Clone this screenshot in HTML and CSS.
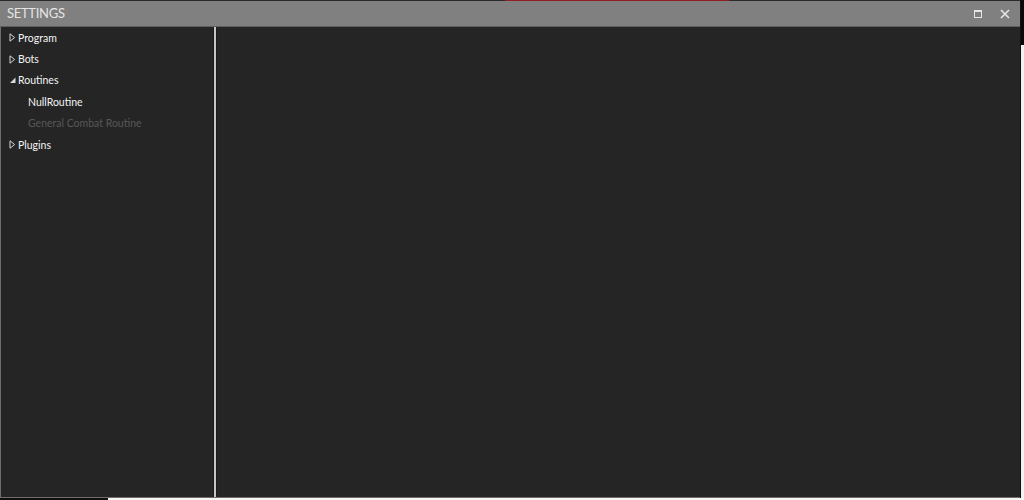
FILE: index.html
```html
<!DOCTYPE html>
<html>
<head>
<meta charset="utf-8">
<link rel="stylesheet" href="styles.css">
</head>
<body>
<div class="screen">
  <div class="main-row">
    <div class="window">
      <div class="top-strip"><span class="strip-gap"></span><span class="strip-red"></span><span class="strip-rest"></span></div>
      <div class="titlebar">
        <span class="title">SETTINGS</span>
        <div class="controls">
          <svg class="ctl" width="10" height="10" viewBox="0 0 10 10"><rect x="1.5" y="1.5" width="7" height="7" fill="none" stroke="#e6e6e6" stroke-width="1"/><rect x="1" y="1" width="8" height="2" fill="#e6e6e6"/></svg>
          <svg class="ctl close" width="12" height="12" viewBox="0 0 12 12"><path d="M2 2 L10 10 M10 2 L2 10" stroke="#e6e6e6" stroke-width="1.6"/></svg>
        </div>
      </div>
      <div class="body">
        <div class="tree">
          <div class="row"><svg class="arrow" width="7" height="9" viewBox="0 0 7 9"><path d="M1 0.8 L5.6 4.5 L1 8.2 Z" fill="none" stroke="#d8d8d8" stroke-width="1"/></svg><span>Program</span></div>
          <div class="row"><svg class="arrow" width="7" height="9" viewBox="0 0 7 9"><path d="M1 0.8 L5.6 4.5 L1 8.2 Z" fill="none" stroke="#d8d8d8" stroke-width="1"/></svg><span>Bots</span></div>
          <div class="row"><svg class="arrow" width="7" height="9" viewBox="0 0 7 9"><path d="M6.5 1.5 L6.5 7 L1 7 Z" fill="#d8d8d8"/></svg><span>Routines</span></div>
          <div class="row child">NullRoutine</div>
          <div class="row child disabled">General Combat Routine</div>
          <div class="row"><svg class="arrow" width="7" height="9" viewBox="0 0 7 9"><path d="M1 0.8 L5.6 4.5 L1 8.2 Z" fill="none" stroke="#d8d8d8" stroke-width="1"/></svg><span>Plugins</span></div>
        </div>
        <div class="splitter"></div>
        <div class="content"></div>
      </div>
    </div>
    <div class="outside-right"><div class="or-dark"></div><div class="or-light"></div></div>
  </div>
  <div class="bottom-strip"><div class="bs-dark"></div><div class="bs-light"></div></div>
</div>
</body>
</html>
```
FILE: styles.css
```css
html, body { margin: 0; padding: 0; }
body {
  width: 1024px;
  height: 500px;
  overflow: hidden;
  background: #ffffff;
  font-family: Lato, "Open Sans", "Liberation Sans", sans-serif;
}
.screen { display: flex; flex-direction: column; width: 1024px; height: 500px; }
.main-row { display: flex; height: 498px; }
.window {
  width: 1020px;
  display: flex;
  flex-direction: column;
  background: #252525;
  border-right: 1px solid #111;
}
.top-strip { height: 1px; display: flex; background: #2b2b2b; }
.strip-gap { width: 505px; }
.strip-red { width: 224px; background: #8e2020; }
.strip-rest { flex: 1; }
.titlebar {
  height: 25px;
  background: #808080;
  border-bottom: 1px solid #5f5f5f;
  display: flex;
  align-items: center;
  justify-content: space-between;
  padding-left: 7px;
}
.title {
  color: #e4e4e4;
  font-size: 13px;
  letter-spacing: -0.3px;
  font-family: Lato, "Open Sans", sans-serif;
  line-height: 1;
  margin-top: -1px;
}
.controls { display: flex; align-items: center; gap: 16px; padding-right: 9px; }
.ctl { display: block; }
.body {
  flex: 1;
  display: flex;
  border-left: 1px solid #6e6e6e;
  border-bottom: 1px solid #6e6e6e;
}
.tree {
  width: 212px;
  padding-top: 0;
  display: flex;
  flex-direction: column;
}
.row {
  height: 21.4px;
  display: flex;
  align-items: center;
  color: #f4f4f4;
  font-size: 10.5px;
  padding-left: 8px;
}
.arrow { margin-right: 2px; display: block; }
.row.child { padding-left: 27px; }
.row.disabled { color: #585858; }
.splitter {
  width: 2px;
  background: #c6c6c6;
  border-left: 1px solid #1c1c1c;
  border-right: 1px solid #1c1c1c;
}
.content { flex: 1; background: #252525; }
.outside-right { flex: 1; display: flex; flex-direction: column; }
.or-dark { height: 45px; background: #0a0a0a; }
.or-light { flex: 1; background: #f2f2f2; }
.bottom-strip { height: 2px; display: flex; }
.bs-dark { width: 108px; background: #0f0f0f; }
.bs-light { flex: 1; background: #f5f5f5; }
```
